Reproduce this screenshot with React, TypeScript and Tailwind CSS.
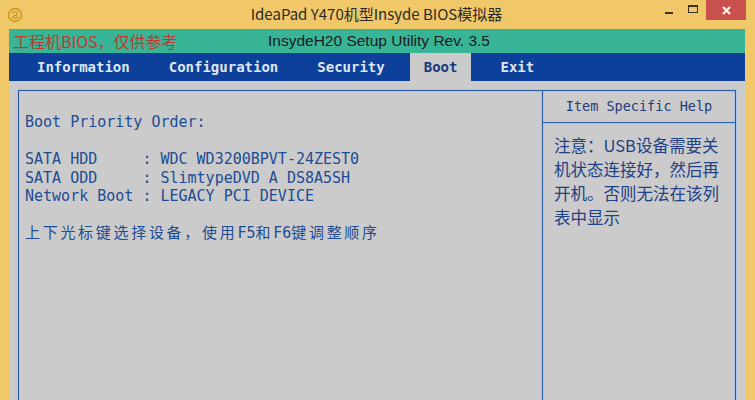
import React from 'react';

const mono = { fontFamily: '"DejaVu Sans Mono", "Noto Sans CJK SC", monospace' };
const cjk = { fontFamily: '"Noto Sans CJK SC", "Noto Sans", sans-serif' };

const tabs = ['Information', 'Configuration', 'Security', 'Boot', 'Exit'];

const AppIcon = () => (
  <svg width="16" height="16" viewBox="0 0 16 16">
    <circle cx="8" cy="8" r="6.5" fill="none" stroke="#c9961c" strokeWidth="1.4" />
    <path d="M5 6.2 C6 4.4 10 4.4 10.6 6.4 C11 8 8 8.2 6.6 9 C5 10 6.2 11.8 8.4 11.4 C9.6 11.2 10.4 10.4 10.8 9.6" fill="none" stroke="#c9961c" strokeWidth="1.3" strokeLinecap="round" />
  </svg>
);

const WindowControls = () => (
  <div className="flex items-start h-full">
    <div className="w-[24px] h-[20px] flex items-center justify-center">
      <div className="w-[8px] h-[2px] bg-[#3a3325] mt-[5px]" />
    </div>
    <div className="w-[24px] h-[20px] flex items-center justify-center">
      <div className="w-[10px] h-[8px] border border-[#3a3325] border-t-2 -mt-[3px]" />
    </div>
    <div className="w-[40px] h-[20px] bg-[#c8504d] flex items-center justify-center ml-[1px]">
      <svg width="9" height="9" viewBox="0 0 9 9">
        <path d="M1 1 L8 8 M8 1 L1 8" stroke="#ffffff" strokeWidth="2" />
      </svg>
    </div>
  </div>
);

const App = () => {
  return (
    <div className="w-[755px] h-[400px] overflow-hidden bg-[#f1c869] flex flex-col">
      {/* title bar */}
      <div className="h-[29px] shrink-0 flex items-stretch">
        <div className="flex-1 basis-0 flex items-center pl-[7px]">
          <AppIcon />
        </div>
        <div className="flex items-center text-[15px] text-[#2b2b2b] pb-[1px]" style={cjk}>
          IdeaPad Y470机型Insyde BIOS模拟器
        </div>
        <div className="flex-1 basis-0 flex justify-end pr-[9px]">
          <WindowControls />
        </div>
      </div>

      {/* client */}
      <div className="flex-1 min-h-0 ml-[9px] mr-[10px] flex flex-col bg-[#cbcbcb]">
        <div className="h-[24px] shrink-0 bg-[#38b497] flex items-center">
          <div className="flex-1 basis-0 pl-[4px] text-[16px] text-[#c03a2c]" style={cjk}>
            工程机BIOS，仅供参考
          </div>
          <div className="text-[15.5px] text-[#1c1c1c]" style={{ fontFamily: '"Liberation Sans", Arial, sans-serif' }}>
            InsydeH20 Setup Utility Rev. 3.5
          </div>
          <div className="flex-1 basis-0" />
        </div>

        <div className="h-[28px] shrink-0 bg-[#0c409a] flex items-stretch pl-[14px] gap-[11px]">
          {tabs.map((t) => (
            <div
              key={t}
              className={
                t === 'Boot'
                  ? 'px-[14px] flex items-center bg-[#cbcbcb] text-[#173a80] font-bold text-[14px]'
                  : t === 'Exit'
                  ? 'px-[14px] ml-[4px] flex items-center text-[#dfe6f2] font-bold text-[14px]'
                  : 'px-[14px] flex items-center text-[#dfe6f2] font-bold text-[14px]'
              }
              style={mono}
            >
              {t}
            </div>
          ))}
        </div>

        <div className="flex-1 min-h-0 overflow-hidden pt-[9px] px-[9px]">
          <div className="h-[340px] flex border border-[#2b5ca8] shadow-[0_0_0_1px_#aac3e6,inset_0_0_0_1px_#aac3e6]">
            <div className="flex-1 pl-[6px] pt-[22px] text-[15px] leading-[18.5px] text-[#1d4b94] whitespace-pre" style={mono}>
              <div>Boot Priority Order:</div>
              <div>&nbsp;</div>
              <div>SATA HDD     : WDC WD3200BPVT-24ZEST0</div>
              <div>SATA ODD     : SlimtypeDVD A DS8A5SH</div>
              <div>Network Boot : LEGACY PCI DEVICE</div>
              <div>&nbsp;</div>
              <div className="tracking-[2.7px]">
                上下光标键选择设备，使用<span className="tracking-normal">F5</span>和<span className="tracking-normal">F6</span>键调整顺序
              </div>
            </div>
            <div className="w-[193px] flex flex-col border-l border-[#2b5ca8] shadow-[-1px_0_0_#aac3e6,inset_1px_0_0_#aac3e6]">
              <div className="h-[32px] flex items-center justify-center text-[13.5px] text-[#1e3b7c] border-b border-[#2b5ca8] shadow-[0_1px_0_#aac3e6]" style={mono}>
                Item Specific Help
              </div>
              <div className="pl-[11px] pt-[10px] text-[16.5px] leading-[24px] text-[#233f86]" style={cjk}>
                <div>注意：USB设备需要关</div>
                <div>机状态连接好，然后再</div>
                <div>开机。否则无法在该列</div>
                <div>表中显示</div>
              </div>
            </div>
          </div>
        </div>
      </div>
    </div>
  );
};

export default App;
